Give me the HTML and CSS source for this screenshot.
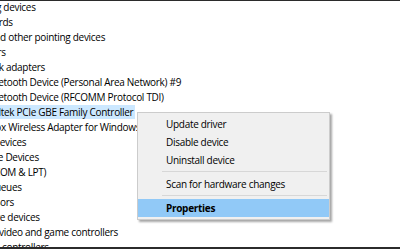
FILE: index.html
```html
<!DOCTYPE html>
<html lang="en">
<head>
    <meta charset="UTF-8">
    <title>Device Manager</title>
    <link rel="stylesheet" href="styles.css">
</head>
<body>
    <div class="window">
        <ul class="tree">
            <li class="cat">Imaging devices</li>
            <li class="cat">Keyboards</li>
            <li class="cat">Mice and other pointing devices</li>
            <li class="cat">Monitors</li>
            <li class="cat">Network adapters</li>
            <li class="dev">Bluetooth Device (Personal Area Network) #9</li>
            <li class="dev">Bluetooth Device (RFCOMM Protocol TDI)</li>
            <li class="dev"><span class="selected">Realtek PCIe GBE Family Controller</span></li>
            <li class="dev">Xbox Wireless Adapter for Windows</li>
            <li class="cat">Other devices</li>
            <li class="cat">Portable Devices</li>
            <li class="cat">Ports (COM &amp; LPT)</li>
            <li class="cat">Print queues</li>
            <li class="cat">Processors</li>
            <li class="cat">Software devices</li>
            <li class="cat">Sound, video and game controllers</li>
            <li class="cat">Storage controllers</li>
        </ul>

        <div class="menu">
            <div class="item">Update driver</div>
            <div class="item">Disable device</div>
            <div class="item">Uninstall device</div>
            <div class="sep"></div>
            <div class="item">Scan for hardware changes</div>
            <div class="sep"></div>
            <div class="item active">Properties</div>
        </div>
    </div>
</body>
</html>
```

FILE: styles.css
```css
body {
    margin: 0;
    width: 400px;
    height: 250px;
    overflow: hidden;
    background: #fff;
    font-family: 'Open Sans', 'Noto Sans', sans-serif;
    font-size: 10px;
    letter-spacing: -0.3px;
    color: #000;
}
.window {
    position: relative;
    height: 246px;
    border-top: 1px solid #2b2b2b;
    border-bottom: 2px solid #2b2b2b;
    overflow: hidden;
}
.tree {
    list-style: none;
    margin: -1px 0 0 -34px;
    padding: 0;
}
.tree li {
    height: 15px;
    line-height: 15px;
    white-space: nowrap;
}
.tree .dev {
    padding-left: 18px;
}
.selected {
    background: #cce8ff;
    margin-left: -4px;
    padding: 0 2px;
    display: inline-block;
    height: 14px;
}
.menu {
    position: absolute;
    left: 137px;
    top: 111px;
    width: 191px;
    padding: 2px 0;
    background: #f0f0f0;
    border: 1px solid #cccccc;
    box-shadow: 2px 2px 2px rgba(0, 0, 0, 0.35);
}
.item {
    height: 18px;
    line-height: 18px;
    padding-left: 28px;
}
.item.active {
    background: #91c9f7;
    font-weight: bold;
}
.sep {
    height: 1px;
    background: #d7d7d7;
    margin: 2px 2px 3px 24px;
}
```
